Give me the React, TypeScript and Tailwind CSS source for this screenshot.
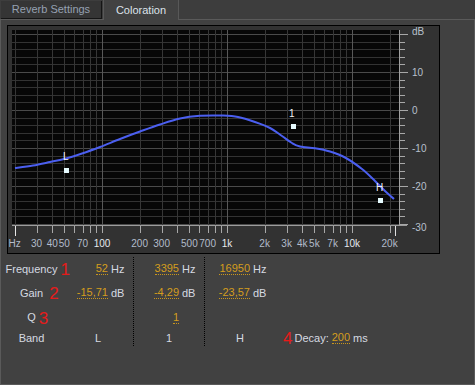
import React from "react";

const FREQS = [
  20, 30, 40, 50, 60, 70, 80, 90, 100, 200, 300, 400, 500, 600, 700, 800, 900,
  1000, 2000, 3000, 4000, 5000, 6000, 7000, 8000, 9000, 10000, 20000,
];
const MAJOR = [100, 1000, 10000];

const fx = (f: number) => 102 + 125 * Math.log10(f / 100);
const dy = (db: number) => 110 - 3.8 * db;

const FREQ_LABELS: [string, number][] = [
  ["Hz", 20],
  ["30", 30],
  ["40", 40],
  ["50", 50],
  ["70", 70],
  ["100", 100],
  ["200", 200],
  ["300", 300],
  ["500", 500],
  ["700", 700],
  ["1k", 1000],
  ["2k", 2000],
  ["3k", 3000],
  ["4k", 4000],
  ["5k", 5000],
  ["7k", 7000],
  ["10k", 10000],
  ["20k", 20000],
];

const DB_LABELS: [string, number][] = [
  ["dB", 35],
  ["10", 76],
  ["0", 114],
  ["-10", 152],
  ["-20", 190],
  ["-30", 231],
];

// sampled from the response curve, page coords
const CURVE: [number, number][] = [
  [15, 168], [33, 165.5], [50, 162], [64, 159], [82, 153.5], [100, 147],
  [120, 139], [140, 131.5], [160, 124.5], [180, 118.5], [200, 115.8],
  [223, 115.6], [238, 117], [255, 122], [270, 128], [282, 136], [292, 143],
  [300, 146.5], [315, 148.2], [330, 151.5], [345, 157.5], [362, 169],
  [375, 181], [385, 191], [394, 199],
];

function smoothPath(pts: [number, number][]) {
  let d = `M${pts[0][0]},${pts[0][1]}`;
  for (let i = 0; i < pts.length - 1; i++) {
    const p0 = pts[i - 1] || pts[i];
    const p1 = pts[i];
    const p2 = pts[i + 1];
    const p3 = pts[i + 2] || p2;
    const c1x = p1[0] + (p2[0] - p0[0]) / 6;
    const c1y = p1[1] + (p2[1] - p0[1]) / 6;
    const c2x = p2[0] - (p3[0] - p1[0]) / 6;
    const c2y = p2[1] - (p3[1] - p1[1]) / 6;
    d += ` C${c1x.toFixed(1)},${c1y.toFixed(1)} ${c2x.toFixed(1)},${c2y.toFixed(1)} ${p2[0]},${p2[1]}`;
  }
  return d;
}

function ResponseChart() {
  const dbs: number[] = [];
  for (let db = 20; db >= -30; db -= 2) dbs.push(db);

  return (
    <svg
      width={431}
      height={227}
      viewBox="8 26 431 227"
      className="block"
      fontFamily="'Liberation Sans', Arial, sans-serif"
      fontSize={10}
    >
      <rect x={12} y={30} width={388} height={195} fill="#070707" />

      {dbs.map((db) => (
        <line
          key={db}
          x1={12}
          x2={399}
          y1={Math.round(dy(db)) + 0.5}
          y2={Math.round(dy(db)) + 0.5}
          stroke={db % 10 === 0 ? "#4a4a4a" : "#333333"}
        />
      ))}
      {FREQS.map((f) => (
        <line
          key={f}
          x1={Math.round(fx(f)) + 0.5}
          x2={Math.round(fx(f)) + 0.5}
          y1={30}
          y2={225}
          stroke={MAJOR.includes(f) ? "#585858" : "#363636"}
        />
      ))}

      {/* bottom axis */}
      <line x1={12} x2={407} y1={225.5} y2={225.5} stroke="#9c9c9c" />
      {FREQS.map((f) => (
        <line
          key={"t" + f}
          x1={Math.round(fx(f)) + 0.5}
          x2={Math.round(fx(f)) + 0.5}
          y1={226}
          y2={f === 20 ? 236 : 233}
          stroke={f === 20 ? "#e8e8e8" : "#a8a8a8"}
        />
      ))}
      <line x1={395.5} x2={395.5} y1={226} y2={236} stroke="#e0e0e0" />

      {/* right axis */}
      <line x1={399.5} x2={399.5} y1={30} y2={226} stroke="#a0a0a0" />
      {dbs.map((db) => (
        <line
          key={"r" + db}
          x1={400}
          x2={db % 10 === 0 ? 408 : 405}
          y1={Math.round(dy(db)) + 0.5}
          y2={Math.round(dy(db)) + 0.5}
          stroke="#a8a8a8"
        />
      ))}

      {FREQ_LABELS.map(([t, f]) => (
        <text
          key={t}
          x={fx(f)}
          y={247}
          textAnchor="middle"
          fill={MAJOR.includes(f) ? "#e4e8ee" : "#b3bccb"}
        >
          {t}
        </text>
      ))}
      {DB_LABELS.map(([t, y]) => (
        <text key={t} x={412} y={y} fill="#b8c0cd">
          {t}
        </text>
      ))}

      <path d={smoothPath(CURVE)} fill="none" stroke="#4b5ff0" strokeWidth={2} />

      <rect x={64} y={168} width={5} height={5} fill="#e6fbff" />
      <rect x={291} y={124} width={5} height={5} fill="#e6fbff" />
      <rect x={378} y={198} width={5} height={5} fill="#e6fbff" />
      <text x={63} y={160} fill="#f4f4f4">L</text>
      <text x={289} y={117} fill="#f4f4f4">1</text>
      <text x={376} y={191} fill="#f4f4f4">H</text>
    </svg>
  );
}

function Val({ v, u }: { v: string; u?: string }) {
  return (
    <div className="flex items-center">
      <div className="w-[45px] flex justify-end">
        <span className="leading-[11px] border-b border-dotted border-[#c9961c] text-[#d49d1d]">
          {v}
        </span>
      </div>
      {u && <span className="ml-[3px] text-[#d6dae2]">{u}</span>}
    </div>
  );
}

function Label({ text, n, gap }: { text: string; n: string; gap: string }) {
  return (
    <span className="relative text-[#d6dae2]">
      {text}
      <span
        className={`absolute left-full top-1/2 -translate-y-1/2 text-[17px] leading-none text-[#e51b1b] ${gap}`}
      >
        {n}
      </span>
    </span>
  );
}

const ROWS = ["h-[24px]", "h-[24px]", "h-[25px]", "h-[16px]"];

const BANDS = [
  { f: "52", g: "-15,71", q: "", b: "L" },
  { f: "3395", g: "-4,29", q: "1", b: "1" },
  { f: "16950", g: "-23,57", q: "", b: "H" },
];

export default function App() {
  return (
    <div className="w-[475px] h-[385px] bg-[#3d3d3d] flex flex-col overflow-hidden font-['Liberation_Sans',Arial,sans-serif] text-[11px]">
      <div className="flex h-[20px] shrink-0">
        <div className="w-[1px] border-b border-[#5a5a5a]" />
        <div className="w-[101px] pt-[1px] border-b border-[#5a5a5a]">
          <div className="h-[18px] bg-[#353535] border-r border-b border-[#151515] flex items-center justify-center text-[#96a1b2]">
            Reverb Settings
          </div>
        </div>
        <div className="w-[1px] border-b border-[#5a5a5a]" />
        <div className="w-[76px] bg-[#424242] border-l border-r border-[#585858] flex items-center justify-center text-[#dde2ea]">
          Coloration
        </div>
        <div className="flex-1 border-b border-[#5a5a5a]" />
      </div>

      <div className="flex-1 bg-[#414141] border-l border-r border-b border-[#5a5a5a] flex flex-col">
        <div className="ml-[6px] mt-[5px] w-[433px] h-[229px] border border-black bg-[#323232]">
          <ResponseChart />
        </div>

        <div className="flex mt-[3px]">
          <div className="w-[61px] flex flex-col">
            <div className={`${ROWS[0]} flex items-center justify-center`}>
              <Label text="Frequency" n="1" gap="ml-[3px]" />
            </div>
            <div className={`${ROWS[1]} flex items-center justify-center`}>
              <Label text="Gain" n="2" gap="ml-[6px]" />
            </div>
            <div className={`${ROWS[2]} flex items-center justify-center`}>
              <Label text="Q" n="3" gap="ml-[3px]" />
            </div>
            <div className={`${ROWS[3]} flex items-center justify-center text-[#d6dae2]`}>
              Band
            </div>
          </div>

          {BANDS.map((b, i) => (
            <div
              key={b.b}
              className={`w-[71px] flex flex-col border-l border-dotted ${
                i === 0 ? "border-transparent" : "border-black"
              }`}
            >
              <div className={`${ROWS[0]} flex items-center`}>
                <Val v={b.f} u="Hz" />
              </div>
              <div className={`${ROWS[1]} flex items-center`}>
                <Val v={b.g} u="dB" />
              </div>
              <div className={`${ROWS[2]} flex items-center`}>
                {b.q && <Val v={b.q} />}
              </div>
              <div className={`${ROWS[3]} flex items-center`}>
                <span className="w-[80px] text-center text-[#d6dae2]">{b.b}</span>
              </div>
            </div>
          ))}

          <div className="flex-1 flex flex-col">
            <div className={ROWS[0]} />
            <div className={ROWS[1]} />
            <div className={ROWS[2]} />
            <div className={`${ROWS[3]} flex items-center pl-[8px]`}>
              <span className="text-[17px] leading-none text-[#e51b1b]">4</span>
              <span className="ml-[2px] text-[#d6dae2]">Decay:</span>
              <span className="ml-[3px] leading-[11px] border-b border-dotted border-[#c9961c] text-[#d49d1d]">
                200
              </span>
              <span className="ml-[3px] text-[#d6dae2]">ms</span>
            </div>
          </div>
        </div>
      </div>
    </div>
  );
}
